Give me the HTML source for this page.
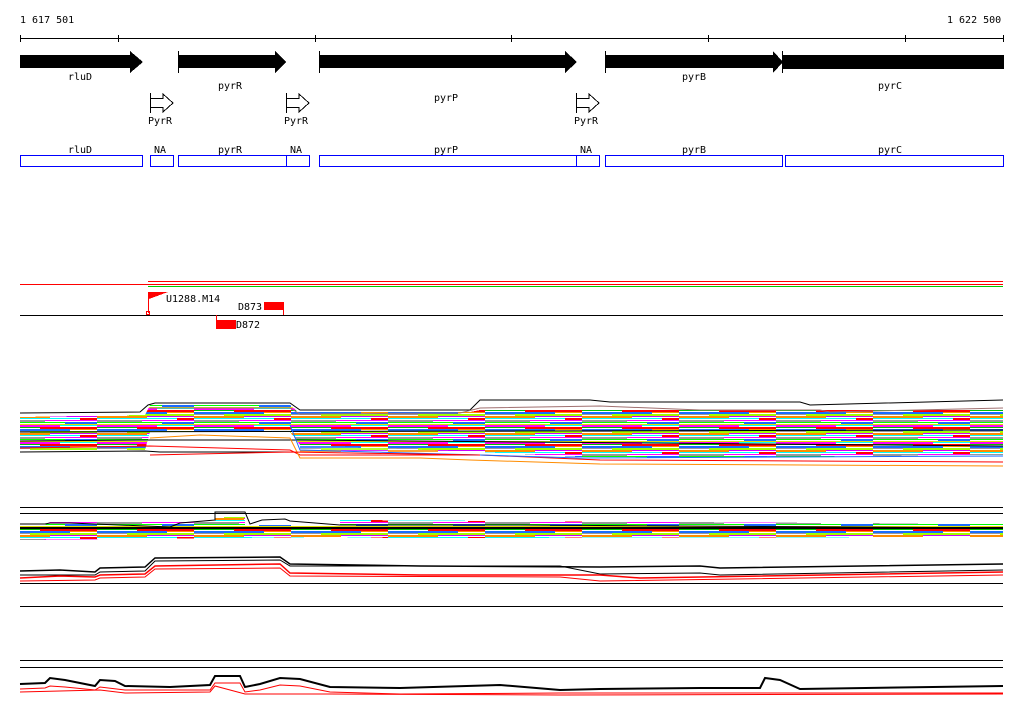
<!DOCTYPE html>
<html><head><meta charset="utf-8"><style>
html,body{margin:0;padding:0;background:#fff;width:1024px;height:714px;overflow:hidden}
svg{display:block}
text{font-family:"DejaVu Sans Mono","Liberation Mono",monospace;font-size:10px;fill:#000}
</style></head><body>
<svg width="1024" height="714" viewBox="0 0 1024 714" xmlns="http://www.w3.org/2000/svg" shape-rendering="crispEdges">
<defs>
<pattern id="st" width="97" height="17" patternUnits="userSpaceOnUse">
<rect width="97" height="17" fill="#fff"/>
<rect y="0" width="60" height="2" fill="#ff00ff"/><rect x="60" y="0" width="37" height="1" fill="#00ffff"/>
<rect y="2" width="40" height="1" fill="#00c000"/><rect x="40" y="2" width="57" height="2" fill="#ff0000"/>
<rect y="4" width="70" height="2" fill="#1a6cff"/><rect x="70" y="4" width="27" height="1" fill="#ff8c00"/>
<rect y="6" width="30" height="1" fill="#999"/><rect x="30" y="6" width="67" height="2" fill="#a0ff00"/>
<rect y="8" width="50" height="2" fill="#ff8c00"/><rect x="50" y="8" width="47" height="1" fill="#cc00ff"/>
<rect y="10" width="80" height="1" fill="#00ffff"/><rect x="80" y="10" width="17" height="2" fill="#ff0000"/>
<rect y="12" width="45" height="2" fill="#999"/><rect x="45" y="12" width="52" height="1" fill="#ff00ff"/>
<rect y="14" width="65" height="1" fill="#00ff00"/><rect x="65" y="14" width="32" height="2" fill="#1a6cff"/>
<rect y="16" width="97" height="1" fill="#e0e000"/>
</pattern>
</defs>
<text x="20" y="23">1 617 501</text>
<text x="947" y="23">1 622 500</text>
<line x1="20" y1="38.5" x2="1003" y2="38.5" stroke="#000"/>
<g stroke="#000"><line x1="20.5" y1="35" x2="20.5" y2="42"/><line x1="118.5" y1="35" x2="118.5" y2="42"/><line x1="315.5" y1="35" x2="315.5" y2="42"/><line x1="511.5" y1="35" x2="511.5" y2="42"/><line x1="708.5" y1="35" x2="708.5" y2="42"/><line x1="905.5" y1="35" x2="905.5" y2="42"/><line x1="1003.5" y1="35" x2="1003.5" y2="42"/></g>
<g fill="#000">
<polygon points="20,55 130,55 130,51 143,62 130,73 130,68 20,68"/>
<polygon points="178,55 275,55 275,51 286,62 275,73 275,68 178,68"/>
<polygon points="319,55 565,55 565,51 577,62 565,73 565,68 319,68"/>
<polygon points="605,55 773,55 773,51 783,62 773,73 773,68 605,68"/>
<rect x="783" y="55" width="221" height="14"/>
</g>
<g stroke="#000"><line x1="178.5" y1="51" x2="178.5" y2="73"/><line x1="319.5" y1="51" x2="319.5" y2="73"/><line x1="605.5" y1="51" x2="605.5" y2="73"/><line x1="782.5" y1="51" x2="782.5" y2="73"/></g>
<text x="68" y="80">rluD</text><text x="218" y="89">pyrR</text><text x="434" y="101">pyrP</text><text x="682" y="80">pyrB</text><text x="878" y="89">pyrC</text>
<g fill="#fff" stroke="#000">
<path d="M150.5,93 V113 M150.5,98.5 H163 V94 L173,103 L163,112 V107.5 H150.5"/>
<path d="M286.5,93 V113 M286.5,98.5 H299 V94 L309,103 L299,112 V107.5 H286.5"/>
<path d="M576.5,93 V113 M576.5,98.5 H589 V94 L599,103 L589,112 V107.5 H576.5"/>
</g>
<text x="148" y="124">PyrR</text><text x="284" y="124">PyrR</text><text x="574" y="124">PyrR</text>
<g fill="none" stroke="#0000ff">
<rect x="20.5" y="155.5" width="122" height="11"/><rect x="150.5" y="155.5" width="23" height="11"/>
<rect x="178.5" y="155.5" width="108" height="11"/><rect x="286.5" y="155.5" width="23" height="11"/>
<rect x="319.5" y="155.5" width="257" height="11"/><rect x="576.5" y="155.5" width="23" height="11"/>
<rect x="605.5" y="155.5" width="177" height="11"/><rect x="785.5" y="155.5" width="218" height="11"/>
</g>
<text x="68" y="153">rluD</text><text x="154" y="153">NA</text><text x="218" y="153">pyrR</text><text x="290" y="153">NA</text><text x="434" y="153">pyrP</text><text x="580" y="153">NA</text><text x="682" y="153">pyrB</text><text x="878" y="153">pyrC</text>
<line x1="148" y1="281.5" x2="1003" y2="281.5" stroke="#f00"/>
<line x1="20" y1="284.5" x2="1003" y2="284.5" stroke="#f00"/>
<line x1="148" y1="286.5" x2="1003" y2="286.5" stroke="#0c0"/>
<line x1="20" y1="315.5" x2="1003" y2="315.5" stroke="#000"/>
<path d="M148.5,313 V292" stroke="#f00"/>
<polygon points="149,292 168,292 149,299" fill="#f00"/>
<rect x="146.5" y="311.5" width="3" height="3" fill="none" stroke="#f00"/>
<text x="166" y="302" font-size="11">U1288.M14</text>
<rect x="264" y="302" width="20" height="8" fill="#f00"/><line x1="283.5" y1="309" x2="283.5" y2="315" stroke="#f00"/>
<text x="238" y="310" font-size="11">D873</text>
<rect x="216" y="320" width="20" height="9" fill="#f00"/><line x1="216.5" y1="315" x2="216.5" y2="320" stroke="#f00"/>
<text x="236" y="328" font-size="11">D872</text>
<polygon fill="url(#st)" points="20,417 145,415 150,405 290,405 298,412 470,412 480,410 1003,410 1003,455 600,458 480,452 300,445 290,432 150,432 145,450 20,450"/>
<polygon fill="url(#st)" opacity="0.8" points="300,432 1003,432 1003,452 300,452"/>
<g fill="none" stroke-width="1" shape-rendering="auto">
<polyline stroke="#000" points="20,413 140,412 148,405 155,403 290,403 300,410 470,410 480,400 590,400 610,402 800,402 810,405 1003,400"/>
<polyline stroke="#a07070" points="150,408 290,408 300,414 460,413 480,408 600,406 700,410 820,410 830,412 1003,408"/>
<polyline stroke="#000" points="20,432 1003,430"/>
<polyline stroke="#000" points="20,441 150,440 290,440 1003,446"/>
<polyline stroke="#000" points="20,452 145,451 160,452 290,452"/>
<polyline stroke="#f00" points="20,448 150,446 290,450 300,455 480,455 600,460 1003,462"/>
<polyline stroke="#ff8c00" points="150,438 200,435 290,438 300,458 420,458 470,460 600,464 1003,466"/>
<polyline stroke="#1a6cff" points="290,425 300,450 480,455 580,458 1003,456"/>
<polyline stroke="#f00" points="150,455 290,452 480,455"/>
</g>
<line x1="20" y1="507.5" x2="1003" y2="507.5" stroke="#000"/>
<line x1="20" y1="513.5" x2="1003" y2="513.5" stroke="#000"/>
<polygon fill="url(#st)" points="20,525 45,525 50,522 215,522 215,517 245,517 245,525 340,525 340,520 1003,524 1003,537 400,538 330,537 20,540"/>
<g fill="none" shape-rendering="auto">
<polyline stroke="#000" points="20,524 45,524 50,523 70,523 170,527 180,523 215,520 215,512 245,512 250,524 262,520 285,519 290,521 340,525 470,525 520,525 1003,528"/>
<polyline stroke="#000" points="20,528 1003,528" stroke-width="2"/>
<polyline stroke="#000" stroke-width="1.5" points="20,571 60,570 95,572 100,568 145,567 155,558 280,557 290,564 420,566 600,567 700,566 720,568 1003,564"/>
<polyline stroke="#000" points="20,575 95,575 100,572 145,571 155,561 280,560 290,566 560,566 600,574 700,573 720,575 1003,570"/>
<polyline stroke="#f00" stroke-width="1.5" points="20,578 60,576 95,577 100,575 145,574 155,566 280,564 290,573 420,575 600,575 640,578 1003,572"/>
<polyline stroke="#f00" points="20,581 95,580 100,578 145,577 155,569 280,568 290,576 560,577 600,581 1003,575"/>
</g>
<line x1="20" y1="583.5" x2="1003" y2="583.5" stroke="#000"/>
<line x1="20" y1="606.5" x2="1003" y2="606.5" stroke="#000"/>
<line x1="20" y1="660.5" x2="1003" y2="660.5" stroke="#000"/>
<line x1="20" y1="667.5" x2="1003" y2="667.5" stroke="#000"/>
<g fill="none" shape-rendering="auto">
<polyline stroke="#000" stroke-width="2" points="20,684 45,683 50,678 65,680 95,686 100,680 115,681 125,686 170,687 210,685 215,676 240,676 245,687 260,684 280,678 300,679 330,687 400,688 500,685 560,690 600,689 700,688 760,688 765,678 780,680 800,689 1003,686"/>
<polyline stroke="#f00" points="20,689 45,688 50,686 65,687 95,690 100,687 125,690 210,690 215,683 240,683 245,692 260,690 280,685 300,686 330,692 400,694 560,693 1003,693"/>
<polyline stroke="#f00" points="20,692 100,690 125,693 210,692 215,686 245,694 330,694 560,695 1003,694"/>
</g>
</svg>
</body></html>
